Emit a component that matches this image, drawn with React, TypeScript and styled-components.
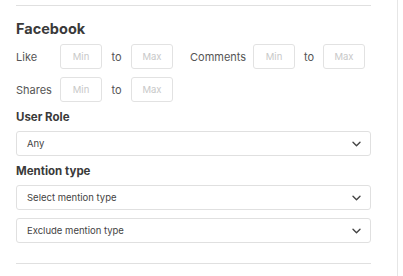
import styled, {createGlobalStyle} from "styled-components";

const GlobalStyle = createGlobalStyle`
  body {
    margin: 0;
    background: #ffffff;
    font-family: Inter, "Noto Sans", sans-serif;
  }
`;

function Chevron() {
    return (
        <svg width="9" height="6" viewBox="0 0 9 6" fill="none">
            <path d="M1 1.2l3.5 3.5 3.5-3.5" stroke="#444" strokeWidth="1.4" strokeLinecap="round" strokeLinejoin="round"/>
        </svg>
    );
}

function RangeInputs({gap = 29}: {gap?: number}) {
    return (
        <>
            <SmallInput placeholder="Min"/>
            <To $width={gap}>to</To>
            <SmallInput placeholder="Max"/>
        </>
    );
}

function Select({label}: {label: string}) {
    return (
        <SelectBox>
            <span>{label}</span>
            <Chevron/>
        </SelectBox>
    );
}

export default function App() {
    return (
        <Panel>
            <GlobalStyle/>
            <Divider/>
            <Heading>Facebook</Heading>
            <Row>
                <Label>Like</Label>
                <RangeInputs/>
                <Label $gapLeft={17} $width={63}>Comments</Label>
                <RangeInputs gap={28}/>
            </Row>
            <Row>
                <Label>Shares</Label>
                <RangeInputs/>
            </Row>
            <SubHeading>User Role</SubHeading>
            <Select label="Any"/>
            <SubHeading>Mention type</SubHeading>
            <SelectStack>
                <Select label="Select mention type"/>
                <Select label="Exclude mention type"/>
            </SelectStack>
            <Divider $top={20}/>
        </Panel>
    );
}

const Panel = styled.div`
  box-sizing: border-box;
  width: 398px;
  height: 276px;
  border-right: 1px solid #e6e6e6;
  padding: 5px 26px 0 16px;
`;

const Divider = styled.div<{ $top?: number }>`
  height: 1px;
  background: #e0e0e0;
  margin-top: ${p => p.$top ?? 0}px;
`;

const Heading = styled.h2`
  margin: 14px 0 6px;
  font-size: 14.5px;
  font-weight: 700;
  color: #3a3a3a;
  line-height: 18px;
`;

const Row = styled.div`
  display: flex;
  align-items: center;
  height: 25px;
  margin-bottom: 8px;
`;

const Label = styled.span<{ $gapLeft?: number; $width?: number }>`
  width: ${p => p.$width ?? 44}px;
  margin-left: ${p => p.$gapLeft ?? 0}px;
  font-size: 11px;
  color: #555;
`;

const SmallInput = styled.input`
  box-sizing: border-box;
  width: 42px;
  height: 25px;
  border: 1px solid #e2e2e2;
  border-radius: 3px;
  padding: 0;
  text-align: center;
  font-family: Inter, sans-serif;
  font-size: 9.5px;
  color: #555;
  outline: none;

  &::placeholder {
    color: #c8c8c8;
  }
`;

const To = styled.span<{ $width: number }>`
  width: ${p => p.$width}px;
  text-align: center;
  font-size: 11px;
  color: #555;
`;

const SubHeading = styled.div`
  margin: 4px 0 7px;
  font-size: 11.5px;
  font-weight: 700;
  color: #3a3a3a;
  line-height: 14px;
`;

const SelectStack = styled.div`
  display: flex;
  flex-direction: column;
  gap: 8px;
`;

const SelectBox = styled.div`
  box-sizing: border-box;
  height: 25px;
  border: 1px solid #e0e0e0;
  border-radius: 3px;
  padding: 0 9px 0 10px;
  display: flex;
  align-items: center;
  justify-content: space-between;
  font-size: 9.5px;
  color: #444;
  margin-bottom: 8px;

  ${SelectStack} & {
    margin-bottom: 0;
  }
`;
